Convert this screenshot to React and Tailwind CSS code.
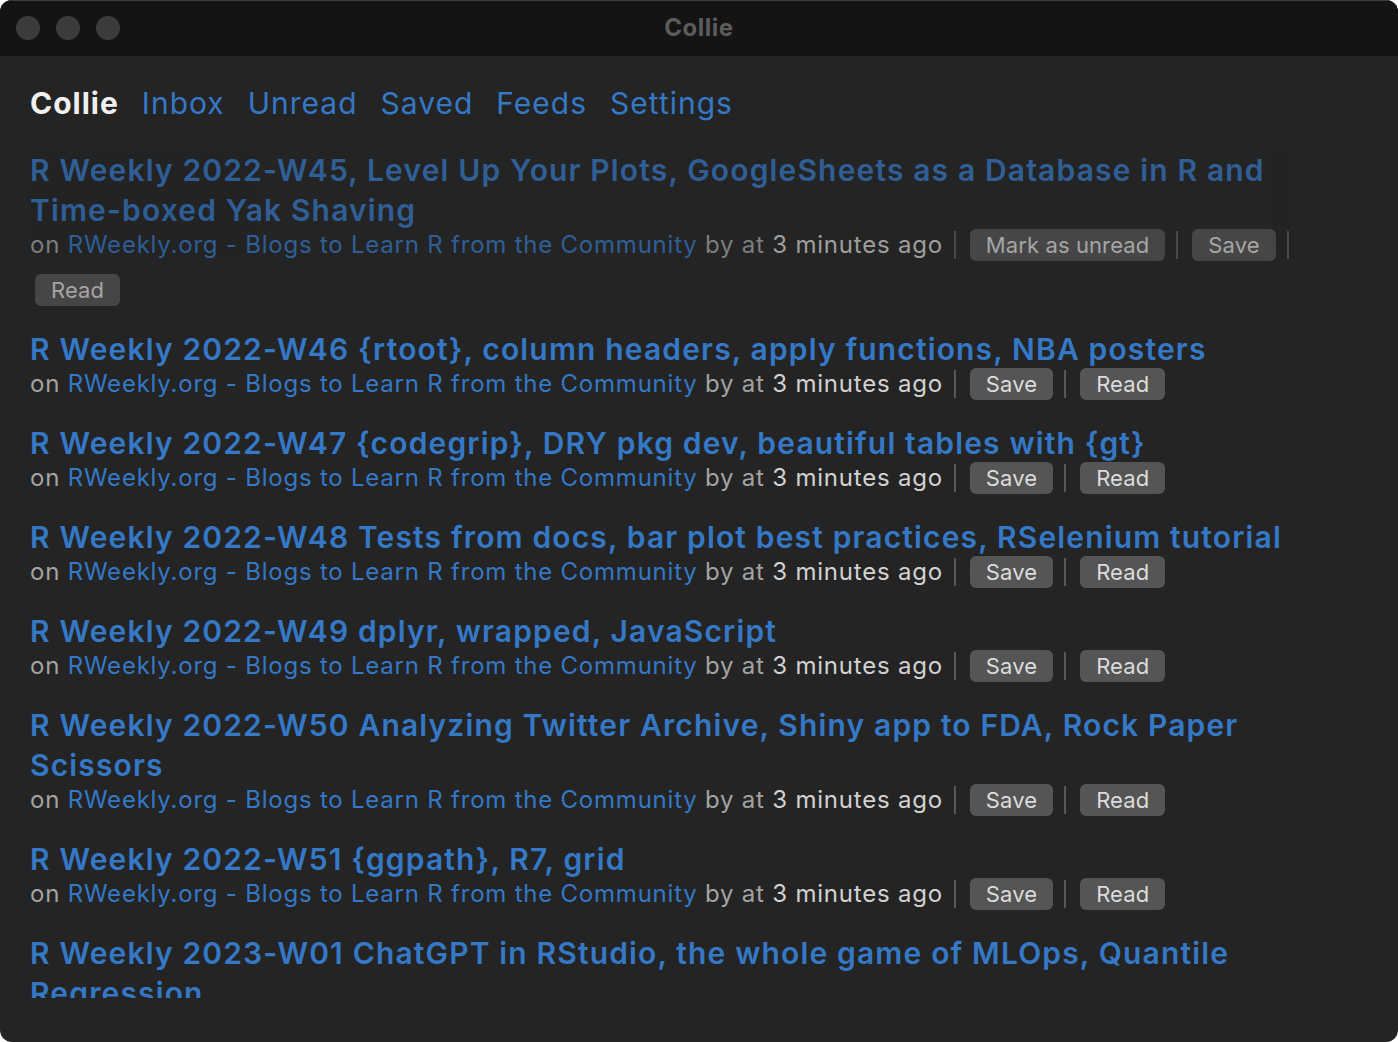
import React from "react";

const SITE = "RWeekly.org - Blogs to Learn R from the Community";

const items = [
  { title: ["R Weekly 2022-W45, Level Up Your Plots, GoogleSheets as a Database in R and ", "Time-boxed", " Yak Shaving"], read: true },
  { title: ["R Weekly 2022-W46 {rtoot}, column headers, apply functions, NBA posters"] },
  { title: ["R Weekly 2022-W47 {codegrip}, DRY pkg dev, beautiful tables with {gt}"] },
  { title: ["R Weekly 2022-W48 Tests from docs, bar plot best practices, RSelenium tutorial"] },
  { title: ["R Weekly 2022-W49 dplyr, wrapped, JavaScript"] },
  { title: ["R Weekly 2022-W50 Analyzing Twitter Archive, Shiny app to FDA, Rock Paper Scissors"] },
  { title: ["R Weekly 2022-W51 {ggpath}, R7, grid"] },
  { title: ["R Weekly 2023-W01 ChatGPT in RStudio, the whole game of MLOps, Quantile Regression"] },
];

function Sep() {
  return <span className="inline-block w-[2px] h-[28px] bg-[#585858] ml-[11px] mr-[14px]" />;
}

function Btn({ children }) {
  return (
    <span className="inline-flex items-center h-[32px] px-[16px] rounded-[6px] bg-[#555555] text-[#dcdcdc] text-[22px] leading-none tracking-[0.1px]">
      {children}
    </span>
  );
}

function Item({ title, read }) {
  const buttons = read ? ["Mark as unread", "Save", "Read"] : ["Save", "Read"];
  return (
    <div className={"mb-[23px] " + (read ? "opacity-70" : "")}>
      <div className="text-[30px] leading-[40px] font-semibold text-[#3478c6] tracking-[1.15px]">
        {title[0]}
        {title[1] && <span className="whitespace-nowrap">{title[1]}</span>}
        {title[2]}
      </div>
      <div className="flex flex-wrap items-center gap-y-[13px] text-[24px] leading-[32px] tracking-[0.78px] -mt-[1px]">
        <span className="text-[#a3a3a3] whitespace-pre">
          {"on "}
          <span className="text-[#3478c6]">{SITE}</span>
          {" by at "}
          <span className="text-[#d2d2d2]">3 minutes ago</span>
        </span>
        {buttons.map((b, i) => (
          <React.Fragment key={b}>
            <Sep />
            {read && i === 2 ? (
              <span className="ml-[5px]"><Btn>{b}</Btn></span>
            ) : (
              <Btn>{b}</Btn>
            )}
          </React.Fragment>
        ))}
      </div>
    </div>
  );
}

export default function App() {
  return (
    <div className="w-[1398px] h-[1042px] bg-white" style={{ fontFamily: "Inter, 'Noto Sans', sans-serif" }}>
      <div className="w-full h-full rounded-[12px] overflow-hidden bg-[#242424] flex flex-col">
        <div className="h-[56px] shrink-0 bg-[#141414] border-t border-[#3c3c3c] relative flex items-center justify-center">
          <div className="absolute left-[16px] top-[15px] flex gap-[16px]">
            <span className="w-[24px] h-[24px] rounded-full bg-[#3b3b3b]" />
            <span className="w-[24px] h-[24px] rounded-full bg-[#3b3b3b]" />
            <span className="w-[24px] h-[24px] rounded-full bg-[#3b3b3b]" />
          </div>
          <span className="text-[24px] leading-[30px] font-bold text-[#5c5c5c] tracking-[0.5px] -mt-[2px]">Collie</span>
        </div>
        <div className="h-[942px] overflow-hidden px-[30px] pt-[27px]">
          <nav className="flex items-center gap-[23px] text-[30px] leading-[40px] tracking-[1px]">
            <span className="font-bold text-[#f0f0f0]">Collie</span>
            <span className="text-[#3478c6]">Inbox</span>
            <span className="text-[#3478c6]">Unread</span>
            <span className="text-[#3478c6]">Saved</span>
            <span className="text-[#3478c6]">Feeds</span>
            <span className="text-[#3478c6]">Settings</span>
          </nav>
          <div className="mt-[27px]">
            {items.map((it) => (
              <Item key={it.title[0]} {...it} />
            ))}
          </div>
        </div>
      </div>
    </div>
  );
}
